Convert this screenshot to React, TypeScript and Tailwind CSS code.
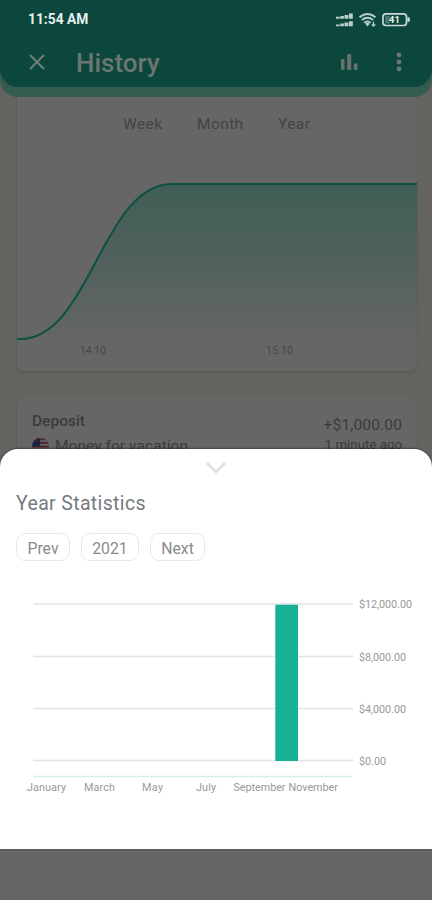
import type { ReactNode } from "react"

const ranges = ["Week", "Month", "Year"]

const gridLines = [
  { y: 604, label: "$12,000.00", width: 53 },
  { y: 656.5, label: "$8,000.00", width: 47 },
  { y: 708.5, label: "$4,000.00", width: 47 },
  { y: 760.5, label: "$0.00", width: 27 },
]

const months = [
  { x: 27, label: "January", width: 39 },
  { x: 84, label: "March", width: 31 },
  { x: 142, label: "May", width: 21 },
  { x: 196, label: "July", width: 20 },
  { x: 233.5, label: "September", width: 52 },
  { x: 288.5, label: "November", width: 49.5 },
]

export default function App() {
  return (
    <div className="relative h-[900px] w-[432px] overflow-hidden bg-[#64635f] font-['Roboto',sans-serif]">
      <TopBar />
      <main className="px-4">
        <BalanceCard />
        <DepositCard />
      </main>
      <StatisticsSheet />
    </div>
  )
}

/* --- Header --- */

function TopBar() {
  return (
    <header className="relative z-10 h-[97px] rounded-b-[18px] bg-[#355c51]">
      <div className="h-[87px] rounded-b-[18px] bg-[#0b473c]">
        <div className="flex h-10 items-center justify-between pl-[28px] pr-[21px]">
          <span className="text-[13.8px] font-bold leading-none text-[#e6efec]">11:54 AM</span>
          <StatusIcons />
        </div>
        <div className="flex h-[43px] items-center pl-[29px] pr-[30px]">
          <svg className="h-4 w-4" viewBox="0 0 16 16" fill="none" stroke="#71807b" strokeWidth="2">
            <path d="M1 1L15 15M15 1L1 15" />
          </svg>
          <h1 className="ml-[31px] pt-[3px] text-[26px] font-medium leading-none text-[#6c7673]">History</h1>
          <div className="ml-auto flex items-center gap-[38px]">
            <svg className="h-[18px] w-[17px]" viewBox="0 0 17 18" fill="#68736f">
              <rect x="0" y="6" width="3.5" height="11" rx="1" />
              <rect x="6.2" y="1" width="4" height="16" rx="1" />
              <rect x="12.8" y="10.5" width="3.7" height="6.5" rx="1" />
            </svg>
            <svg className="h-5 w-[6px]" viewBox="0 0 6 20" fill="#6c7673">
              <circle cx="3" cy="3" r="2.4" />
              <circle cx="3" cy="10" r="2.4" />
              <circle cx="3" cy="17" r="2.4" />
            </svg>
          </div>
        </div>
      </div>
    </header>
  )
}

function StatusIcons() {
  return (
    <svg className="h-4 w-[76px]" viewBox="335 12 76 16">
      {/* two stacked sim signals */}
      <g fill="#bccfca">
        <path d="M336 16.8h3.6v1.9h-3.6zM340.2 15.9h3.7v2.8h-3.7zM344.5 14.9h3.9v3.8h-3.9zM349 13.6h3.8v5.1h-3.8z" />
        <path d="M336 24.4h3.6v1.9h-3.6zM340.2 23.5h3.7v2.8h-3.7zM344.5 22.5h3.9v3.8h-3.9zM349 21.2h3.8v5.1h-3.8z" />
      </g>
      <g fill="none" stroke="#bccfca" strokeWidth="1.9">
        <path d="M359.5 17.2Q367.5 10.8 375.5 17.2" />
        <path d="M361.9 20.1Q367.5 15.6 373.1 20.1" />
        <path d="M364.3 22.8Q367.5 20.2 370.7 22.8" />
      </g>
      <path d="M365.2 23.7Q367.5 22 369.8 23.7L367.5 26.4Z" fill="#bccfca" />
      <path d="M373.5 21.8v4.4M371.7 24.4l1.8 1.8 1.8-1.8" fill="none" stroke="#bccfca" strokeWidth="1.3" />
      <rect x="383" y="13.8" width="23.5" height="11.7" rx="3" fill="none" stroke="#c9d9d5" strokeWidth="1.7" />
      <rect x="385" y="15.8" width="5" height="7.7" rx="1" fill="#47766b" />
      <path d="M407.4 17.2h1.2q1.4 0 1.4 2.4t-1.4 2.4h-1.2z" fill="#c9d9d5" />
      <text x="394.5" y="23" textAnchor="middle" fontSize="9.4" fontWeight="700" fill="#eef4f2">41</text>
    </svg>
  )
}

/* --- Dimmed page content --- */

function BalanceCard() {
  return (
    <section className="h-[275px] w-[402px] rounded-b-lg border-x border-b border-[#5c5c59] bg-[#666666] shadow-[0_1px_1px_rgba(0,0,0,0.1)]">
      <div className="flex h-[54px] items-center pl-[106px] pt-[2px] text-[15.5px] tracking-[0.4px] text-[#434343]">
        {ranges.map((range, i) => (
          <span key={range} className={i === 0 ? "w-[74px]" : i === 1 ? "w-[81px]" : ""}>
            {range}
          </span>
        ))}
      </div>
      <svg className="block h-[215px] w-[400px]" viewBox="17 151 400 215">
        <defs>
          <linearGradient id="balanceFill" x1="0" y1="184" x2="0" y2="345" gradientUnits="userSpaceOnUse">
            <stop offset="0" stopColor="#3f5e56" />
            <stop offset="0.5" stopColor="#52615e" />
            <stop offset="1" stopColor="#666666" />
          </linearGradient>
        </defs>
        <path d="M16 339H20C90 339 102 184 172 184H418V345H16Z" fill="url(#balanceFill)" />
        <path d="M16 339H20C90 339 102 184 172 184H418" fill="none" stroke="#0b5142" strokeWidth="2" />
        <g fontSize="10.5" fill="#474747">
          <text x="80" y="354" textLength="26">14.10</text>
          <text x="266" y="354" textLength="27">15.10</text>
        </g>
      </svg>
    </section>
  )
}

function DepositCard() {
  return (
    <section className="mt-[25px] flex h-[90px] w-[402px] justify-between rounded-lg border-x border-[#5c5c59] bg-[#666666] px-[15px] pt-[14px] text-[#373c3e]">
      <div>
        <p className="text-[15.5px] font-medium leading-5">Deposit</p>
        <p className="mt-[5px] flex items-center gap-[6px] text-[15.5px] leading-5 tracking-[0.05px]">
          <Flag />
          Money for vacation
        </p>
      </div>
      <div className="pt-1 text-right">
        <p className="text-[15.5px] leading-5 tracking-[0.15px]">+$1,000.00</p>
        <p className="text-[13.3px] leading-5">1 minute ago</p>
      </div>
    </section>
  )
}

function Flag() {
  return (
    <svg className="h-[17px] w-[17px]" viewBox="0 0 18 18">
      <clipPath id="flagClip">
        <circle cx="9" cy="9" r="9" />
      </clipPath>
      <g clipPath="url(#flagClip)">
        <rect width="18" height="18" fill="#646464" />
        <path d="M0 1.3H18M0 5.2H18M0 9.1H18M0 13H18M0 16.9H18" stroke="#54202a" strokeWidth="2" />
        <rect width="8.5" height="9" fill="#1c2542" />
      </g>
    </svg>
  )
}

/* --- Bottom sheet --- */

function StatisticsSheet() {
  return (
    <div className="absolute inset-x-0 bottom-0 top-[449px] z-20 flex flex-col">
      <section className="h-[400px] rounded-t-[18px] bg-white shadow-[0_-1px_2px_rgba(0,0,0,0.35)]">
        <div className="flex h-[38px] justify-center pt-[13px]">
          <svg className="h-3 w-5" viewBox="0 0 20 12" fill="none" stroke="#dedede" strokeWidth="2.6">
            <path d="M1 1L10 10L19 1" />
          </svg>
        </div>
        <h2 className="pl-4 text-[19.5px] leading-[34px] tracking-[0.35px] text-[#757b80]">Year Statistics</h2>
        <div className="mt-3 flex gap-[11px] pl-4">
          <Pill className="w-[54px]">Prev</Pill>
          <Pill className="w-[58px]">2021</Pill>
          <Pill className="w-[55px]">Next</Pill>
        </div>
        <YearChart />
      </section>
      <div className="flex-1 border-t-2 border-[#5c5c5c] bg-[#666666]" />
    </div>
  )
}

function Pill({ className, children }: { className: string; children: ReactNode }) {
  return (
    <button
      className={`h-7 rounded-[9px] border border-[#e9e9e9] pt-[3px] text-[15.8px] leading-none text-[#8b8b8b] ${className}`}
    >
      {children}
    </button>
  )
}

function YearChart() {
  return (
    <svg className="mt-[19px] block h-[230px] w-[432px]" viewBox="0 580 432 230">
      {gridLines.map(line => (
        <g key={line.label}>
          <path d={`M33 ${line.y}H353`} stroke="#e2e4e4" strokeWidth="1.4" />
          <text x="359" y={line.y + 4} textLength={line.width} fontSize="10.8" fill="#999999">
            {line.label}
          </text>
        </g>
      ))}
      <path d="M33 776.5H352" stroke="#d8eee8" strokeWidth="1.3" />
      <rect x="275.3" y="604.7" width="22.7" height="156.3" fill="#19b196" />
      {months.map(month => (
        <text key={month.label} x={month.x} y="791" textLength={month.width} fontSize="10.8" fill="#999999">
          {month.label}
        </text>
      ))}
    </svg>
  )
}
